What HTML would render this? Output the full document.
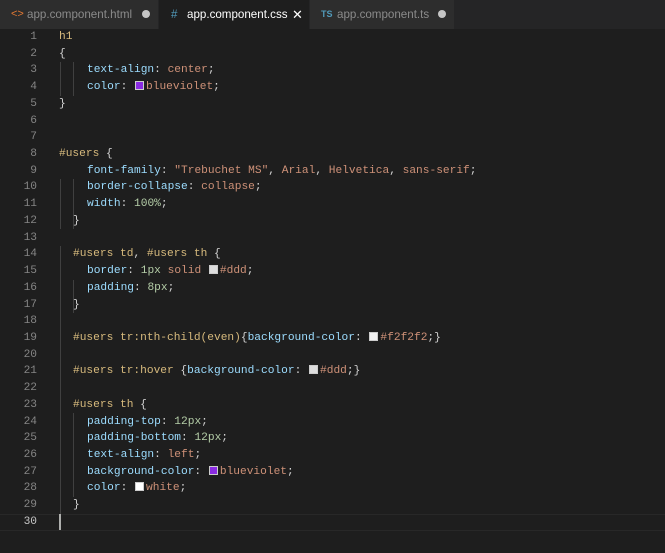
<!DOCTYPE html>
<html><head><meta charset="utf-8"><style>
body{margin:0;width:665px;height:553px;background:#1e1e1e;overflow:hidden;font-family:"Liberation Mono",monospace;}
.tabs{position:absolute;left:0;top:0;width:665px;height:29px;background:#252526;}
.tab{position:absolute;top:0;height:29px;background:#2d2d2d;color:#8b8b8b;font-family:"Liberation Sans",sans-serif;font-size:11.6px;line-height:29px;white-space:nowrap}
.tab.act{background:#1e1e1e;color:#fff}
.ed{position:absolute;left:0;top:29px;width:665px}
.l{position:relative;height:16.72px;line-height:16.72px;font-size:11.2px;white-space:pre;color:#d4d4d4}
.n{position:absolute;right:628px;color:#858585;text-align:right}
.c{position:absolute;left:59px}
.s{color:#d7ba7d}.p{color:#9cdcfe}.v{color:#ce9178}.m{color:#b5cea8}
.sw{display:inline-block;width:9px;height:9px;border:1px solid #ccc;margin:0 2px 0 1px;vertical-align:-1px;box-sizing:border-box}
.g{position:absolute;width:1px;background:#404040}
</style></head><body>
<div class="tabs">
<div class="tab" style="left:0;width:158px"><span style="position:absolute;left:11px;color:#e37933;font-size:11px">&lt;&gt;</span><span style="position:absolute;left:27px">app.component.html</span><span style="position:absolute;left:142px;top:10px;width:8px;height:8px;border-radius:50%;background:#c5c5c5"></span></div>
<div class="tab act" style="left:159px;width:150px"><span style="position:absolute;left:12px;color:#519aba">#</span><span style="position:absolute;left:28px">app.component.css</span><span style="position:absolute;left:133px;font-size:13px">✕</span></div>
<div class="tab" style="left:310px;width:144px"><span style="position:absolute;left:11px;color:#519aba;font-size:9px;font-weight:bold">TS</span><span style="position:absolute;left:27px">app.component.ts</span><span style="position:absolute;left:128px;top:10px;width:8px;height:8px;border-radius:50%;background:#c5c5c5"></span></div>
</div>
<div class="ed">
<div class="g" style="left:60px;top:33px;height:34px"></div>
<div class="g" style="left:73px;top:33px;height:34px"></div>
<div class="g" style="left:60px;top:150px;height:50px"></div>
<div class="g" style="left:73px;top:150px;height:50px"></div>
<div class="g" style="left:60px;top:217px;height:280px"></div>
<div class="g" style="left:73px;top:251px;height:33px"></div>
<div class="g" style="left:73px;top:384px;height:84px"></div>
<div class="l"><span class="n">1</span><span class="c"><span class="s">h1</span></span></div>
<div class="l"><span class="n">2</span><span class="c">{</span></div>
<div class="l"><span class="n">3</span><span class="c" style="left:87px"><span class="p">text-align</span>: <span class="v">center</span>;</span></div>
<div class="l"><span class="n">4</span><span class="c" style="left:87px"><span class="p">color</span>: <span class="sw" style="background:#8a2be2"></span><span class="v">blueviolet</span>;</span></div>
<div class="l"><span class="n">5</span><span class="c">}</span></div>
<div class="l"><span class="n">6</span></div>
<div class="l"><span class="n">7</span></div>
<div class="l"><span class="n">8</span><span class="c"><span class="s">#users</span> {</span></div>
<div class="l"><span class="n">9</span><span class="c" style="left:87px"><span class="p">font-family</span>: <span class="v">"Trebuchet MS"</span>, <span class="v">Arial</span>, <span class="v">Helvetica</span>, <span class="v">sans-serif</span>;</span></div>
<div class="l"><span class="n">10</span><span class="c" style="left:87px"><span class="p">border-collapse</span>: <span class="v">collapse</span>;</span></div>
<div class="l"><span class="n">11</span><span class="c" style="left:87px"><span class="p">width</span>: <span class="m">100%</span>;</span></div>
<div class="l"><span class="n">12</span><span class="c" style="left:73px">}</span></div>
<div class="l"><span class="n">13</span></div>
<div class="l"><span class="n">14</span><span class="c" style="left:73px"><span class="s">#users td</span>, <span class="s">#users th</span> {</span></div>
<div class="l"><span class="n">15</span><span class="c" style="left:87px"><span class="p">border</span>: <span class="m">1px</span> <span class="v">solid</span> <span class="sw" style="background:#ddd"></span><span class="v">#ddd</span>;</span></div>
<div class="l"><span class="n">16</span><span class="c" style="left:87px"><span class="p">padding</span>: <span class="m">8px</span>;</span></div>
<div class="l"><span class="n">17</span><span class="c" style="left:73px">}</span></div>
<div class="l"><span class="n">18</span></div>
<div class="l"><span class="n">19</span><span class="c" style="left:73px"><span class="s">#users tr:nth-child(even)</span>{<span class="p">background-color</span>: <span class="sw" style="background:#f2f2f2"></span><span class="v">#f2f2f2</span>;}</span></div>
<div class="l"><span class="n">20</span></div>
<div class="l"><span class="n">21</span><span class="c" style="left:73px"><span class="s">#users tr:hover</span> {<span class="p">background-color</span>: <span class="sw" style="background:#ddd"></span><span class="v">#ddd</span>;}</span></div>
<div class="l"><span class="n">22</span></div>
<div class="l"><span class="n">23</span><span class="c" style="left:73px"><span class="s">#users th</span> {</span></div>
<div class="l"><span class="n">24</span><span class="c" style="left:87px"><span class="p">padding-top</span>: <span class="m">12px</span>;</span></div>
<div class="l"><span class="n">25</span><span class="c" style="left:87px"><span class="p">padding-bottom</span>: <span class="m">12px</span>;</span></div>
<div class="l"><span class="n">26</span><span class="c" style="left:87px"><span class="p">text-align</span>: <span class="v">left</span>;</span></div>
<div class="l"><span class="n">27</span><span class="c" style="left:87px"><span class="p">background-color</span>: <span class="sw" style="background:#8a2be2"></span><span class="v">blueviolet</span>;</span></div>
<div class="l"><span class="n">28</span><span class="c" style="left:87px"><span class="p">color</span>: <span class="sw" style="background:#fff"></span><span class="v">white</span>;</span></div>
<div class="l"><span class="n">29</span><span class="c" style="left:73px">}</span></div>
<div class="l" style="box-shadow:inset 0 1px 0 #282828,inset 0 -1px 0 #282828"><span class="n" style="color:#c6c6c6">30</span><span style="position:absolute;left:59px;top:0;width:2px;height:16px;background:#aeafad"></span></div>
</div>
</body></html>
